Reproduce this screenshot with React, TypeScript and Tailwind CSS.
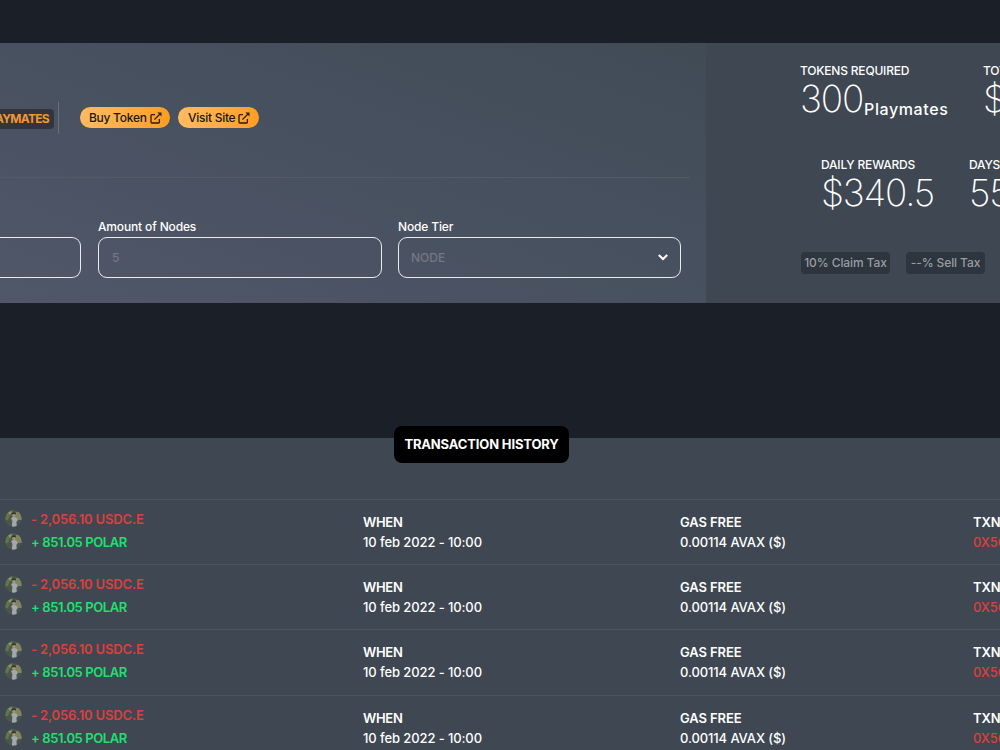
const rows = [
    { id: 1, style: "h-[65px]", top: "pt-[7px]", line: "h-[23px]" },
    { id: 2, style: "h-[65px]", top: "pt-2", line: "h-[22px]" },
    { id: 3, style: "h-[66px]", top: "pt-2", line: "h-[22px]" },
    { id: 4, style: "h-[65px]", top: "pt-[7px]", line: "h-[23px]" },
]

const ExternalIcon = () => (
    <svg viewBox="0 0 12 12" className="w-3 h-3" fill="none" stroke="#2b1a08" strokeWidth="1.3">
        <path d="M5 2.6H1.9a.9.9 0 0 0-.9.9v6.6a.9.9 0 0 0 .9.9h6.6a.9.9 0 0 0 .9-.9V7" />
        <path d="M4.4 7.6 10 2" />
        <path d="M7.4.5h4.1v4.1Z" fill="#2b1a08" stroke="none" />
    </svg>
)

const Avatar = () => (
    <svg viewBox="0 0 17 17" className="w-[17px] h-[17px] shrink-0">
        <clipPath id="avatar"><circle cx="8.5" cy="8.5" r="8.2" /></clipPath>
        <g clipPath="url(#avatar)">
            <rect width="17" height="17" fill="#4d5b45" />
            <path d="M0 4 5 0h3L4.5 6 2.5 11H0Z" fill="#62744f" />
            <path d="M3 2.5 7 1 5.5 5Z" fill="#8c9871" />
            <path d="M11 2h6v8l-4 1-2.5-4Z" fill="#7f8561" />
            <path d="M12 10h5v7h-5Z" fill="#46534a" />
            <path d="M0 10h5l1 7H0Z" fill="#4a5748" />
            <path d="M6 8 9.5 6.5l2.8 2 .3 2.5-1.2.6.4 5.4H6.8L7.4 11Z" fill="#a3a7af" />
            <circle cx="9" cy="5.4" r="1.9" fill="#a58f76" />
            <path d="M6.8 4.6C6.8 1.9 11 2 11 4.4L9 4Z" fill="#30352f" />
        </g>
    </svg>
)

const LinkButton = ({ label, style }: LinkProps) => (
    <button className={`flex items-center h-[21px] rounded-full bg-linear-to-r from-[#ffbb60] to-[#ff9d20] text-[12px] font-medium tracking-[-0.27px] text-[#20180f] whitespace-nowrap ${style}`}>
        <span>{label}</span>
        <ExternalIcon />
    </button>
)

const Stat = ({ label, value, unit, style }: StatProps) => (
    <div className={`shrink-0 whitespace-nowrap text-white ${style}`}>
        <p className="text-[12px] leading-4 font-medium tracking-[-0.2px]">{label}</p>
        <div className="flex h-10 text-[37px] leading-10 font-[250]">
            <span className="tracking-[-1.2px]">{value}</span>
            {unit && <span className="text-[16px] leading-5 pt-5 pl-px font-medium tracking-[0.6px]">{unit}</span>}
        </div>
    </div>
)

const TopPanel = () => (
    <section className="flex h-[260px] bg-[#3e4752]">
        <div className="w-[706px] shrink-0 bg-linear-to-tr from-[#505769] via-[#485160] to-[#414b56]">
            <div className="flex items-center h-[135px] pt-[15px] mr-4 border-b border-[#525b67]">
                <div className="flex w-[54px] h-5 mt-0.5 justify-end items-center pr-[5px] rounded-r bg-[#31353f] text-[12px] font-bold tracking-[-0.7px] text-[#f59530]">
                    PLAYMATES
                </div>
                <div className="w-px h-8 ml-1 mr-[21px] bg-[#687180]" />
                <LinkButton label="Buy Token" style="w-[90px] mr-2 pl-[9px] gap-[3px]" />
                <LinkButton label="Visit Site" style="w-[81px] pl-[10px] gap-[3px]" />
            </div>
            <div className="flex pt-[41px] text-[12px] font-medium text-white">
                <div className="w-[81px] mr-[17px]">
                    <div className="h-[18px]" />
                    <div className="h-[41px] rounded-r-[9px] border border-l-0 border-[#e9ebef]" />
                </div>
                <div className="w-[284px] mr-4">
                    <p className="h-[18px] leading-4 tracking-[-0.15px]">Amount of Nodes</p>
                    <div className="flex items-center h-[41px] px-[13px] rounded-[9px] border border-[#e9ebef] text-[#747883]">5</div>
                </div>
                <div className="w-[283px]">
                    <p className="h-[18px] leading-4 tracking-[-0.15px]">Node Tier</p>
                    <div className="flex items-center justify-between h-[41px] px-3 rounded-[9px] border border-[#e9ebef] text-[#747883]">
                        <span>NODE</span>
                        <svg viewBox="0 0 10 7" className="w-[10px] h-[7px]" fill="none" stroke="white" strokeWidth="2">
                            <path d="m.8 1 4.2 4 4.2-4" />
                        </svg>
                    </div>
                </div>
            </div>
        </div>
        <div className="flex-1 min-w-0 overflow-hidden pt-5">
            <div className="flex pl-[94px]">
                <Stat label="TOKENS REQUIRED" value="300" unit="Playmates" style="w-[183px]" />
                <Stat label="TOTAL COST" value="$1,500" />
            </div>
            <div className="flex pt-[38px] pl-[115px]">
                <Stat label="DAILY REWARDS" value="$340.5" style="w-[148px]" />
                <Stat label="DAYS TO ROI" value="55" />
            </div>
            <div className="flex gap-4 pt-[39px] pl-[95px] text-[12px] font-medium tracking-[-0.1px] text-[#9a9da1] whitespace-nowrap">
                <span className="flex justify-center items-center w-[89px] h-[22px] rounded bg-[#2d353e]">10% Claim Tax</span>
                <span className="flex justify-center items-center w-[79px] h-[22px] rounded bg-[#2d353e]">--% Sell Tax</span>
            </div>
        </div>
    </section>
)

const History = () => (
    <section className="h-[312px] bg-[#3e4752]">
        <div className="flex h-[62px] pl-[394px] border-b border-[#4a545f]">
            <h2 className="flex justify-center items-center w-[175px] h-[37px] -mt-3 rounded-lg bg-black text-[13px] font-bold tracking-[-0.15px] text-white whitespace-nowrap">
                TRANSACTION HISTORY
            </h2>
        </div>
        {
            rows.map((row) => (
                <div className={`flex border-b border-[#4a545f] text-[13px] leading-5 font-medium tracking-[-0.1px] text-white whitespace-nowrap ${row.style}`} key={row.id}>
                    <div className={`w-[363px] shrink-0 pl-[5px] font-semibold ${row.top}`}>
                        <div className={`flex items-center gap-[9px] tracking-[-0.15px] text-[#dd403b] ${row.line}`}>
                            <Avatar />
                            <span>- 2,056.10 USDC.E</span>
                        </div>
                        <div className="flex items-center h-[23px] gap-[9px] tracking-[-0.4px] text-[#20e070]">
                            <Avatar />
                            <span>+ 851.05 POLAR</span>
                        </div>
                    </div>
                    <div className="w-[317px] shrink-0 pt-3">
                        <p className="tracking-[-0.3px] font-semibold">WHEN</p>
                        <p>10 feb 2022 - 10:00</p>
                    </div>
                    <div className="w-[293px] shrink-0 pt-3">
                        <p className="font-semibold">GAS FREE</p>
                        <p>0.00114 AVAX ($)</p>
                    </div>
                    <div className="flex-1 min-w-0 overflow-hidden pt-3">
                        <p className="font-semibold">TXN HASH</p>
                        <p className="text-[#dd403b]">0X569B</p>
                    </div>
                </div>
            ))
        }
    </section>
)

export default function App() {
    return (
        <main className="w-[1000px] h-[750px] overflow-hidden bg-[#1b1f27] font-['Inter',sans-serif]">
            <div className="h-[43px]" />
            <TopPanel />
            <div className="h-[135px]" />
            <History />
        </main>
    )
}

type LinkProps = {
    label: string
    style: string
}

type StatProps = {
    label: string
    value: string
    unit?: string
    style?: string
}
